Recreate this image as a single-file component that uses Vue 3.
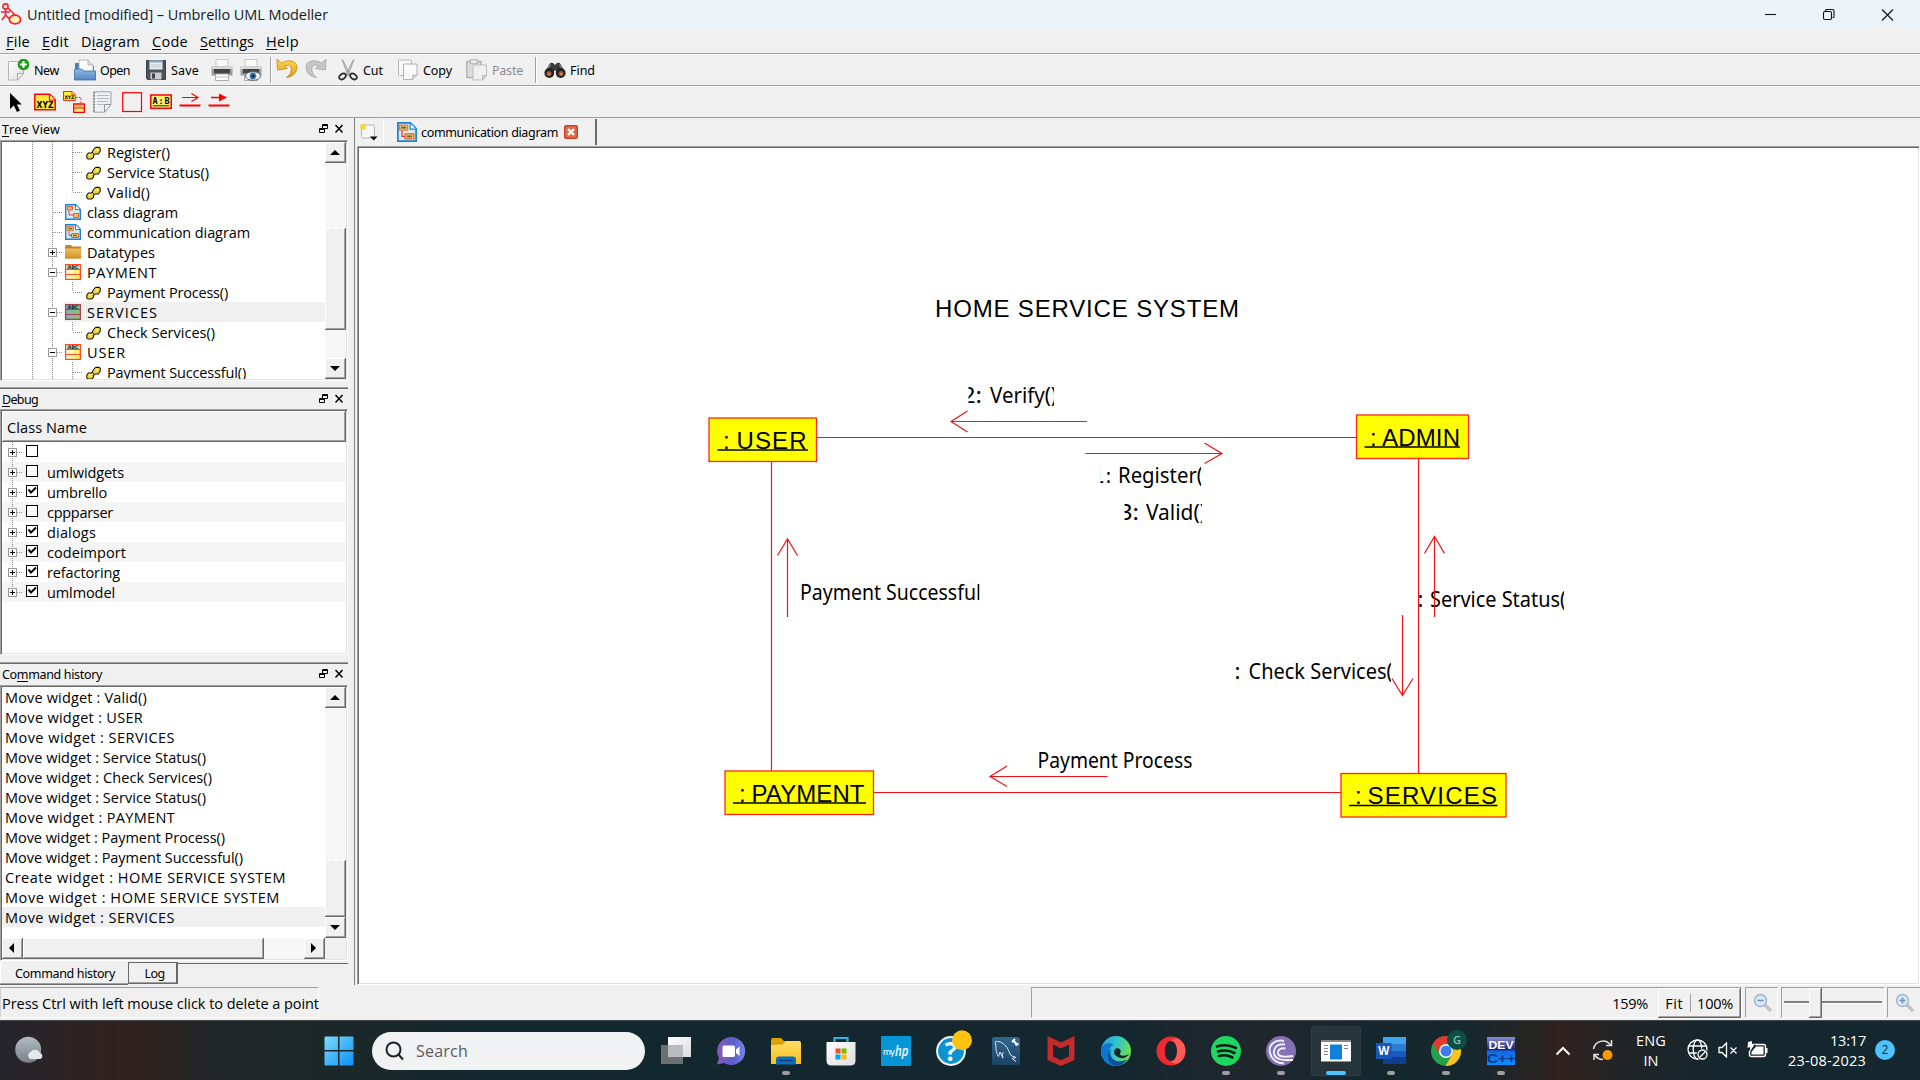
<script setup>
// Spreads a label's letters so that it takes the given advance width.
const vFit = {
  mounted(el, { value }) {
    if (!value) return
    const n = el.textContent.length
    const w = el.getBoundingClientRect().width
    el.style.letterSpacing = `${((value - w) / n).toFixed(3)}px`
  },
}

const menus = [
  { pre: '', key: 'F', post: 'ile', w: 24, slot: 36 },
  { pre: '', key: 'E', post: 'dit', w: 27, slot: 39 },
  { pre: 'D', key: 'i', post: 'agram', w: 59, slot: 71 },
  { pre: '', key: 'C', post: 'ode', w: 36, slot: 48 },
  { pre: '', key: 'S', post: 'ettings', w: 54, slot: 66 },
  { pre: '', key: 'H', post: 'elp', w: 33, slot: 40 },
]

const page = '<path d="M.5 2.500h15v12l-6 6.500h-9z" fill="url(#gPaper)" stroke="#b4b4b4"/><path d="M9.500 21v-6.500h6z" fill="#fff" stroke="#aaa"/>'
const printer = '<path d="M5 .5h12V8H5z" fill="#fafafa" stroke="#bbb" stroke-width=".8"/><path d="M.5 7.500h21v9H.5z" fill="#9c9c9c"/><path d="M.5 7.500h21v2.500H.5z" fill="#dadada"/><path d="M3 10h16v4.500H3z" fill="#444"/><path d="M4.500 15h13v6.500h-13z" fill="#fff" stroke="#999" stroke-width=".8"/><path d="M4.500 18h13" stroke="#bbb"/>'
const art = {
  new: page + '<circle cx="15.500" cy="5.500" r="5.800" fill="#1d9a1d"/><path d="M15.500 2.200v6.600M12.200 5.500h6.600" stroke="#fff" stroke-width="2.200"/>',
  open: '<path d="M1 4h7l2 3h10v10H1z" fill="#4d7db5"/><path d="M5 1h9l5 5v9H5z" fill="#fbfbfb" stroke="#aaa" stroke-width=".8"/><path d="M14 1v5h5" fill="#ddd" stroke="#aaa" stroke-width=".8"/><path d="M.5 21v-10q0-1 1-1h6l3 2h11v9z" fill="url(#gBlue)" stroke="#3c6ca4" stroke-width=".8"/>',
  save: '<path d="M1.500 1.500h19v19h-18l-1-1z" fill="#4d545c" stroke="#3c4146"/><path d="M4.500 1.500h13v9h-13z" fill="#e9edf0"/><path d="M4.500 1.500h13v2h-13z" fill="#8aa3b8"/><path d="M6 6h10M6 8h10" stroke="#c2c8cc"/><path d="M5.500 13.500h11v7h-11z" fill="#c9cdd0"/><path d="M7 14.500h3v5H7z" fill="#3d4248"/>',
  print: printer,
  preview: printer + '<ellipse cx="13" cy="17" rx="7.500" ry="4.300" fill="#f4f8fb" stroke="#5b6770"/><circle cx="13" cy="17" r="3.400" fill="#3f77ad"/><circle cx="13" cy="17" r="1.500" fill="#102030"/>',
  undo: '<path d="M1 0l.5 11 10-1.500-3-2.500c4-2 7.500 0 6.500 5-.5 3-2.500 5-4.500 6.500 6-.5 10-4.500 10.500-10C21.500 2.500 13-.5 5.500 4z" fill="url(#gGold)" stroke="#c08a14" stroke-width=".8"/>',
  redo: '<path d="M21 0l-.5 11-10-1.500 3-2.500c-4-2-7.500 0-6.500 5 .5 3 2.500 5 4.500 6.500C5.500 18 1.500 14 1 8.500.5 2.500 9-.5 16.500 4z" fill="#c6c6c6" stroke="#a4a4a4" stroke-width=".8"/>',
  cut: '<path d="M5 .5l1 1 7 14-2 1zM17 .5l-1 1-7 14 2 1z" fill="#e4e4e4" stroke="#8e8e8e" stroke-width=".8"/><ellipse cx="5.500" cy="17.500" rx="3.600" ry="2.500" transform="rotate(-35 5.500 17.500)" fill="none" stroke="#262626" stroke-width="1.700"/><ellipse cx="16.500" cy="17.500" rx="3.600" ry="2.500" transform="rotate(35 16.500 17.500)" fill="none" stroke="#262626" stroke-width="1.700"/>',
  copy: '<rect x="1.500" y="1" width="13" height="15.500" rx="1" fill="#f8f8f8" stroke="#b4b4b4"/><path d="M6.500 5h13.500v11l-4.500 4.500h-9z" fill="#fafafa" stroke="#b0b0b0"/><path d="M15.500 20.500v-4.500h4.500z" fill="#ddd" stroke="#aaa" stroke-width=".7"/>',
  paste: '<path d="M.8 2.500h14v16H.8z" fill="#dcdcdc" stroke="#b0b0b0" stroke-width="1.400"/><path d="M4.300 .8h7v4h-7z" fill="#eee" stroke="#aaa"/><path d="M7 6h13.500v10.500l-4 4.500H7z" fill="#f0f0f0" stroke="#bdbdbd"/><path d="M16.500 21v-4.500h4z" fill="#ddd" stroke="#b5b5b5"/>',
  find: '<path d="M5 6q1-3 4-2l2 2 2-2q3-1 4 2l4 7-8 1-2-3-2 3-8-1z" fill="#3a3a3a"/><path d="M6.500 5.500l-3.500 6M15.500 5.500l3.500 6" stroke="#8a8a8a" stroke-width="1.200"/><circle cx="5.300" cy="14" r="4.900" fill="#222"/><circle cx="16.700" cy="14" r="4.900" fill="#222"/><circle cx="5" cy="14.500" r="2.600" fill="#a5552f"/><circle cx="17" cy="14.500" r="2.600" fill="#a5552f"/><circle cx="5" cy="15" r="1.100" fill="#d89a6a"/><circle cx="17" cy="15" r="1.100" fill="#d89a6a"/>',
}

const actions = [
  { icon: 'new', label: 'New', slot: 66, w: 25 },
  { icon: 'open', label: 'Open', slot: 71, w: 30 },
  { icon: 'save', label: 'Save', slot: 66, w: 28 },
  { icon: 'print', slot: 29 },
  { icon: 'preview', slot: 30 },
  { sep: true, slot: 6 },
  { icon: 'undo', slot: 29 },
  { icon: 'redo', slot: 32 },
  { icon: 'cut', label: 'Cut', slot: 60, w: 20 },
  { icon: 'copy', label: 'Copy', slot: 69, w: 29 },
  { icon: 'paste', label: 'Paste', slot: 69, w: 31, off: true },
  { sep: true, slot: 9 },
  { icon: 'find', label: 'Find', slot: 60, w: 25 },
]

const xyz = '<path d="M.8 .8h15l5.400 5.400v10H.8z" fill="#ffe93c" stroke="red" stroke-width="1.500"/><path d="M15.500 1v5.500H21" fill="#fff2a0" stroke="red" stroke-width="1.200"/><text x="11" y="14" font-size="8.500" font-weight="bold" text-anchor="middle" textLength="17" lengthAdjust="spacingAndGlyphs" font-family="DejaVu Sans">XYZ</text>'
const tools = [
  '<path d="M5 2v16l3.800-3.500 3.200 6.500 3-1.400-3.200-6.200h5z" fill="#000"/>',
  '<g transform="translate(0 2.500)">' + xyz + '</g>',
  '<g transform="scale(.58)">' + xyz + '</g><path d="M13 6.500h5v6" fill="none" stroke="red" stroke-dasharray="1.500 1.500"/><path d="M10.700 13h10.600v8.300H10.700z" fill="#ffee8a" stroke="red" stroke-width="1.300"/><path d="M11 17h10" stroke="red"/><path d="M12.500 15h7" stroke="#a08020"/>',
  '<path d="M2 .8h17v12l-6.500 8.400H2z" fill="#eef1f2" stroke="#9aa0a3"/><path d="M5 4.500h12M5 7.500h12M5 10.500h11M5 13.500h7" stroke="#b3babd"/><path d="M12.500 21v-7.500H19z" fill="#fff" stroke="#8d9396"/><path d="M2 1v20" stroke="#777" stroke-dasharray="1.500 1.500" stroke-width="1.500"/>',
  '<rect x="1.700" y="1.700" width="18.800" height="18.800" fill="none" stroke="#f00" stroke-width="1.200"/>',
  '<rect x=".8" y="4" width="20.400" height="13.300" fill="#ffee74" stroke="red" stroke-width="1.500"/><text x="11" y="13" font-size="8.500" font-weight="bold" text-anchor="middle" textLength="17" font-family="DejaVu Sans Mono">A:B</text><path d="M3 14.800h16" stroke="#222"/>',
  '<path d="M3 6.500h15M12.500 2.500l6.500 4-6.500 4" fill="none" stroke="red" stroke-width="1.200"/><path d="M.5 14.500h21" stroke="red" stroke-width="2"/>',
  '<path d="M3 6.500h10" stroke="red" stroke-width="1.500"/><path d="M11 2.500l8 4-8 4z" fill="red"/><path d="M.5 14.500h21" stroke="red" stroke-width="2"/>',
]

const sheet = '<path d="M.7 .7h10l4.600 4.600v10H.7z" fill="#d8ecf8" stroke="#1684d8" stroke-width="1.400"/><path d="M10.500 1v4.600h4.600" fill="#fff" stroke="#1684d8"/>'
const kinds = {
  method: '<path d="M.8 10.500L2.500 8h3.200l1-1.300L8.500 3.700 10.500 2H14l1.200 1v3l-2 3h-3L8 10.500v2L6 14.500H2.200L.8 13.200z" fill="#f0d63a" stroke="#111" stroke-width="1.100"/><path d="M6.500 7l2.200 2.500" stroke="#111"/><path d="M3 10.500l2-1M10.500 5l2.500-1" stroke="#fffac0" stroke-width="1.200"/>',
  cdiag: sheet + '<path d="M2.500 2.500h5v3.500h-5z" fill="#f7b480" stroke="#ec5a28"/><path d="M8.500 9.500h5v4h-5z" fill="#f7bd60" stroke="#ec5a28"/><path d="M4 6.500v4.500h4.500" fill="none" stroke="#e33"/>',
  comm: sheet + '<path d="M2 2.500h6.500v4H2z" fill="#e3c878" stroke="#ec7a38"/><path d="M6.500 9.500h7v4h-7z" fill="#e3d070" stroke="#ec5a28"/><path d="M4 7v4.500h2.500" fill="none" stroke="#e33"/><path d="M3.300 4.500h4M8 11.500h4" stroke="#5a6a30" stroke-width="1.300"/>',
  folder: '<path d="M0 2.500l1-1.500h5l1 1.500h9v4H0z" fill="#b98331"/><path d="M0 4.500h16V14q0 .8-.8.8H.8Q0 14.800 0 14z" fill="url(#gFolder)"/>',
  klass: '<path d="M.6 .6h14.800v14.800H.6z" fill="url(#gClass)" stroke="#fb4a24" stroke-width="1.200"/><path d="M1.200 1.200h13.600v3.600H1.200z" fill="#ccd09a"/><path d="M0 5.500h16M0 10.500h16" stroke="#fb4a24" stroke-width="1.200"/><text x="8" y="4.800" font-size="5" font-weight="bold" fill="#333" text-anchor="middle" textLength="11" font-family="DejaVu Sans">ABC</text>',
  klassSel: '<path d="M.6 .6h14.800v14.800H.6z" fill="url(#gSel)" stroke="#a84450" stroke-width="1.200"/><path d="M0 5.500h16M0 10.500h16" stroke="#a84450" stroke-width="1.200"/><text x="8" y="4.800" font-size="5" font-weight="bold" fill="#123" text-anchor="middle" textLength="11" font-family="DejaVu Sans">ABC</text>',
}

const tree = [
  { t: 'Register()', k: 'method', w: 63 },
  { t: 'Service Status()', k: 'method', w: 102 },
  { t: 'Valid()', k: 'method', w: 43, last: true },
  { t: 'class diagram', k: 'cdiag', w: 91 },
  { t: 'communication diagram', k: 'comm', w: 163 },
  { t: 'Datatypes', k: 'folder', w: 68, exp: '+' },
  { t: 'PAYMENT', k: 'klass', w: 70, exp: '-' },
  { t: 'Payment Process()', k: 'method', w: 121, last: true },
  { t: 'SERVICES', k: 'klassSel', w: 71, exp: '-', sel: true },
  { t: 'Check Services()', k: 'method', w: 108, last: true },
  { t: 'USER', k: 'klass', w: 39, exp: '-' },
  { t: 'Payment Successful()', k: 'method', w: 139 },
]

const classes = [
  { t: '', on: false },
  { t: 'umlwidgets', on: false, w: 77 },
  { t: 'umbrello', on: true, w: 60 },
  { t: 'cppparser', on: false, w: 66 },
  { t: 'dialogs', on: true, w: 49 },
  { t: 'codeimport', on: true, w: 79 },
  { t: 'refactoring', on: true, w: 73 },
  { t: 'umlmodel', on: true, w: 68 },
]

const history = [
  ['Move widget : Valid()', 142],
  ['Move widget : USER', 138],
  ['Move widget : SERVICES', 170],
  ['Move widget : Service Status()', 201],
  ['Move widget : Check Services()', 207],
  ['Move widget : Service Status()', 201],
  ['Move widget : PAYMENT', 170],
  ['Move widget : Payment Process()', 220],
  ['Move widget : Payment Successful()', 238],
  ['Create widget : HOME SERVICE SYSTEM', 281],
  ['Move widget : HOME SERVICE SYSTEM', 275],
  ['Move widget : SERVICES', 170],
]

const boxes = [
  { x: 709, y: 418, w: 107.500, name: 'USER', cx: 723, tx: 736.5, len: 70, u: [717.5, 808] },
  { x: 1356.5, y: 415, w: 112, name: 'ADMIN', cx: 1370, tx: 1382, len: 78, u: [1364.5, 1460] },
  { x: 725, y: 771, w: 148.500, name: 'PAYMENT', cx: 739, tx: 751.5, len: 113, u: [733, 866] },
  { x: 1341, y: 773.5, w: 165, name: 'SERVICES', cx: 1355, tx: 1367.5, len: 129.500, u: [1349, 1497.5] },
]

// Message labels; each one is cut at its widget's edges (from..to).
const messages = [
  { n: '2:', nx: 962, nl: 20, t: 'Verify()', x: 990, len: 67, y: 403, from: 968.5, to: 1054 },
  { n: '1:', nx: 1092, nl: 20, t: 'Register()', x: 1118, len: 91, y: 483, from: 1100.500, to: 1201, foot: true },
  { n: '3:', nx: 1119, nl: 20, t: 'Valid()', x: 1146, len: 60, y: 519.5, from: 1124.500, to: 1202 },
  { n: ':', nx: 1417.500, nl: 6, t: 'Service Status()', x: 1430, len: 142, y: 606.5, from: 1418, to: 1564 },
  { n: ':', nx: 1234.5, nl: 6, t: 'Check Services()', x: 1248.500, len: 150, y: 679, from: 1230, to: 1391 },
  { n: '', nx: 0, nl: 0, t: 'Payment Successful', x: 800, len: 181, y: 599.5, from: 790, to: 979.500 },
  { n: '', nx: 0, nl: 0, t: 'Payment Process', x: 1037.500, len: 155, y: 767.5, from: 1030, to: 1200 },
]

const apps = [
  { a: '<path d="M0 9h22v19H0z" fill="#6b7072"/><path d="M7 1h23v20H7z" fill="url(#gPaper)"/><path d="M7 9h15v12H7z" fill="#b9bcbd"/>' },
  { a: '<path d="M15 1a14 14 0 1 1-7 26l-7 1.500 2-6.500A14 14 0 0 1 15 1z" fill="url(#gChat)"/><rect x="6.500" y="9.500" width="12.500" height="11.500" rx="1.500" fill="#fff"/><path d="M20 13.500l3.500-3v9.500l-3.500-3z" fill="#fff"/>' },
  { run: 1, a: '<path d="M0 4q0-2 2-2h8l3 3h13v8H0z" fill="#dea102"/><path d="M0 9l12-.5 3-3.500h13q2 0 2 2v21H0z" fill="url(#gYel)"/><path d="M5 28.500v-5q0-3 3-3h14q3 0 3 3v5z" fill="#0b6cc0"/><path d="M8 24.500h14" stroke="#063f7c" stroke-width="1.200"/>' },
  { a: '<path d="M8.500 8V2h13v6" fill="none" stroke="#2fb4e8" stroke-width="2.200"/><path d="M.5 6h29v18.500q0 5-5 5h-19q-5 0-5-5z" fill="url(#gPaper)"/><path d="M9.500 12.500h5v5h-5z" fill="#f2501f"/><path d="M15.500 12.500h5v5h-5z" fill="#7eb900"/><path d="M9.500 18.500h5v5h-5z" fill="#01a3ee"/><path d="M15.500 18.500h5v5h-5z" fill="#fdb800"/>' },
  { a: '<rect width="30" height="30" rx="1" fill="#0496d6"/><text x="2" y="18.500" font-size="9.500" fill="#fff" textLength="12" font-family="Lato">my</text><text x="14" y="19.500" font-size="15" font-style="italic" font-weight="600" fill="#fff" textLength="13.500" lengthAdjust="spacingAndGlyphs" font-family="Open Sans">hp</text>' },
  { a: '<circle cx="15" cy="15" r="13.900" fill="#0c93d2" stroke="#f2f6f8" stroke-width="2"/><text x="15" y="25" font-size="26" font-weight="bold" fill="#fff" text-anchor="middle" font-family="Open Sans">?</text><circle cx="26" cy="4.300" r="10" fill="#ffc20e"/>' },
  { a: '<rect x="1" y="1" width="28" height="28" rx="2.500" fill="url(#gSql)"/><path d="M7.500 20.500C6 19 4.500 13 5 9.500 4 7.500 4 5.500 5 5.500c4-.5 8 2 11 6 2 3 2.500 6 4 8l5 2-4 .8 4 3.200M7.500 20.500l1.500-4.500 3 6M12 22c-1-3-.5-5 .5-6" fill="none" stroke="#dfe9f0" stroke-width="1"/><path d="M22 4.500l4 4M21 6l3-3M24.500 9.500l3-2" stroke="#fff" stroke-width="2"/>' },
  { a: '<path d="M1.500 0L15 6.500 28.500 0v24L15 30 1.500 24zM7 8.500v12l8 3.700 8-3.700v-12L15 12.500z" fill="#c52b2a" fill-rule="evenodd"/>' },
  { a: '<circle cx="15" cy="15" r="15" fill="url(#gEdge)"/><path d="M.3 13C2 7 9 6 13 9c-4 1-6 5-4 10 2 6 9 8 16 5-4 6-13 8-19 3C1.500 24-.5 18 .3 13z" fill="#0b78cf"/><path d="M11 12c-3 3-2 9 2 12 5 3 10 1 13-1-3 6-9 8-14 6-6-3-7-12-1-17z" fill="#0d4f9c"/><path d="M13.500 14q3-4 6 0c1 2-1 3-.5 4.500 1.500 2 7 1.500 9-1-1 3-5 6-10 4-4-1.500-6-5-4.500-7.500z" fill="#16262d"/>' },
  { a: '<path d="M15 .5A14.500 14.500 0 1 0 15 29.500 14.500 14.500 0 1 0 15 .5zM15 5c4 0 6 4.500 6 10s-2 10-6 10-6.200-4.500-6.200-10S11 5 15 5z" fill="#f02a33" fill-rule="evenodd"/><path d="M15 5c2-2.500 5-3.500 8-2 4 3 6.500 7 6.500 12s-2.500 9-6.500 12c-3 1.500-6 .5-8-2 4 0 6-4.500 6-10s-2-10-6-10z" fill="#ff5a55"/>' },
  { run: 1, a: '<circle cx="15" cy="15" r="15" fill="#1ed760"/><path d="M6 10.500q10-3 19 1.500M7 15.500q9-2.500 16.500 1.500M8 20q7-2 13.500 1.500" fill="none" stroke="#0b1a12" stroke-width="2.600" stroke-linecap="round"/>' },
  { run: 1, a: '<circle cx="15" cy="15" r="15" fill="#8272b4"/><path d="M18 5C9 3 2 9 4 17c1.500 6 6 10 14 10.500M19 8.500c-7-1.500-12 3-11 9 1 5 5 7 19 6.500M19.500 12.500c-5-1-8 1.500-7.500 5 .7 3 4 4 15 2.500" fill="none" stroke="#f1eef8" stroke-width="1.900"/>' },
  { active: 1, a: '<path d="M0 4h30v22H0z" fill="#fdfdfd"/><path d="M0 4h30v2H0z" fill="#8b8680"/><path d="M0 25.500h30" stroke="#9a958e"/><path d="M9 8.500h12v15H9z" fill="#1180d8"/><path d="M3 9.500h4M3 12.500h4M3 15.500h4M3 18.500h4M23 9.500h4M23 12.500h4" stroke="#888"/>' },
  { run: 1, a: '<path d="M7 1h23v7H7z" fill="#41a5ee"/><path d="M7 8h23v7H7z" fill="#2b7cd3"/><path d="M7 15h23v6.500H7z" fill="#185abd"/><path d="M7 21.500h23V28H7z" fill="#103f91"/><rect y="7" width="15.500" height="16" rx="1" fill="#1a56b8"/><text x="7.700" y="19" font-size="11.500" font-weight="bold" fill="#fff" text-anchor="middle" font-family="Open Sans">W</text>' },
  { run: 1, a: '<circle cx="15" cy="15" r="15" fill="#22a14a"/><path d="M2 7.500A15 15 0 0 1 28 7.500L15 8.500a7 7 0 0 0-6 10z" fill="#e33b2e"/><path d="M28 7.500A15 15 0 0 1 14.500 30l6.700-11.500A7 7 0 0 0 20 9z" fill="#fcc31e"/><circle cx="15" cy="15" r="7" fill="#fff"/><circle cx="15" cy="15" r="5.500" fill="#3b7ded"/><circle cx="26" cy="4" r="10" fill="#0c4f45"/><text x="26" y="8" font-size="11" font-weight="600" fill="#8fc0b2" text-anchor="middle" font-family="Open Sans">G</text>' },
  { run: 1, a: '<rect x="1" y="1" width="28" height="28" fill="url(#gDev)"/><text x="15" y="12.500" font-size="11.500" font-weight="bold" fill="#fff" text-anchor="middle" textLength="25" lengthAdjust="spacingAndGlyphs" font-family="Liberation Sans">DEV</text><text x="15.500" y="26.500" font-size="12.500" font-weight="bold" fill="#083b85" text-anchor="middle" textLength="29" lengthAdjust="spacingAndGlyphs" font-family="Liberation Sans">C++</text>' },
]
</script>

<template>
  <div class="screen">
    <svg class="defs" width="0" height="0">
      <defs>
        <linearGradient id="gPaper" x2="1" y2="1"><stop stop-color="#fff" /><stop offset="1" stop-color="#dcdcdc" /></linearGradient>
        <linearGradient id="gBlue" x2="0" y2="1"><stop stop-color="#8fb9e2" /><stop offset="1" stop-color="#5488c2" /></linearGradient>
        <linearGradient id="gGold" x2="0" y2="1"><stop stop-color="#ffd94e" /><stop offset="1" stop-color="#dc9a16" /></linearGradient>
        <linearGradient id="gFolder" x2="0" y2="1"><stop stop-color="#f0bd5e" /><stop offset="1" stop-color="#d18f28" /></linearGradient>
        <linearGradient id="gClass" x2="1" y2="0"><stop stop-color="#fffbe8" /><stop offset="1" stop-color="#fff04a" /></linearGradient>
        <linearGradient id="gSel" x2="1" y2="0"><stop stop-color="#86aebb" /><stop offset="1" stop-color="#8fc06a" /></linearGradient>
        <linearGradient id="gChat" x2="1" y2="0"><stop stop-color="#8659b5" /><stop offset=".6" stop-color="#5b5fcf" /><stop offset="1" stop-color="#7a86ea" /></linearGradient>
        <linearGradient id="gYel" x2="0" y2="1"><stop stop-color="#ffdc6a" /><stop offset="1" stop-color="#fbbf17" /></linearGradient>
        <linearGradient id="gSql" x2="0" y2="1"><stop stop-color="#2f6690" /><stop offset="1" stop-color="#1c4565" /></linearGradient>
        <linearGradient id="gEdge" x2="1" y2=".3"><stop stop-color="#2a9fe0" /><stop offset=".55" stop-color="#33c3cd" /><stop offset="1" stop-color="#69dd55" /></linearGradient>
        <linearGradient id="gDev" x2="0" y2="1"><stop stop-color="#8a8fd8" /><stop offset=".45" stop-color="#20206c" /><stop offset=".5" stop-color="#1566e0" /><stop offset="1" stop-color="#0e8cff" /></linearGradient>
        <linearGradient id="gWin" x2="1" y2="1"><stop stop-color="#7ddcff" /><stop offset="1" stop-color="#0a8ff5" /></linearGradient>
        <linearGradient id="gMoon" x2="0" y2="1"><stop stop-color="#b3bac1" /><stop offset="1" stop-color="#78828b" /></linearGradient>
      </defs>
    </svg>

    <header class="titlebar">
      <svg class="logo" viewBox="0 0 22 22" width="22" height="22">
        <circle cx="4.500" cy="3.500" r="2.600" fill="none" stroke="#f22" stroke-width="1.600" />
        <path d="M4.500 6v6M0 9h9M4.500 12L1 17M4.500 12l4 4M7 5l7 7" fill="none" stroke="#f22" stroke-width="1.600" />
        <ellipse cx="14" cy="16.500" rx="5.600" ry="4.400" fill="#fdf0c0" stroke="#f22" stroke-width="1.700" />
      </svg>
      <span class="caption"><span v-fit="301">Untitled [modified] – Umbrello UML Modeller</span></span>
      <svg class="winbtns" viewBox="0 0 136 16" width="136" height="16" fill="none" stroke="#111" stroke-width="1.100">
        <path d="M2 7.500h11" />
        <rect x="60.500" y="4.500" width="8" height="8" rx="1.500" /><path d="M62.500 4.500V3.500q0-1 1-1h6q1.500 0 1.500 1.500v5.500q0 1.200-1.500 1.200" />
        <path d="M119 2.500l11 11M130 2.500l-11 11" />
      </svg>
    </header>

    <nav class="menubar">
      <span v-for="m in menus" :key="m.key" class="menu" :style="{ width: m.slot + 'px' }"><span v-fit="m.w">{{ m.pre }}<u>{{ m.key }}</u>{{ m.post }}</span></span>
    </nav>

    <div class="toolbar first">
      <div v-for="(a, i) in actions" :key="i" class="action" :class="{ off: a.off }" :style="{ width: a.slot + 'px' }">
        <i v-if="a.sep" class="vsep"></i>
        <svg v-else viewBox="0 0 22 22" width="22" height="22" v-html="art[a.icon]"></svg>
        <span v-if="a.label" v-fit="a.w" class="lbl">{{ a.label }}</span>
      </div>
    </div>

    <div class="toolbar second">
      <svg v-for="(t, i) in tools" :key="i" viewBox="0 0 22 22" width="22" height="22" v-html="t"></svg>
    </div>

    <main class="work">
      <aside class="docks">
        <section class="dock tree-dock">
          <h2><span v-fit="58"><u>T</u>ree View</span>
            <svg viewBox="0 0 26 12" width="26" height="12"><path d="M4.500 1.500h5v4h-5zM4 2.500h6M1.500 5.500h5v4h-5zM1 6.500h6" fill="none" stroke="#000" /><path d="M17.500 2l7 7.500M24.500 2l-7 7.500" stroke="#000" stroke-width="1.500" /></svg>
          </h2>
          <div class="frame row-split">
            <div class="rows">
              <div v-for="(r, i) in tree" :key="i" class="row tree-row">
                <svg v-if="r.k === 'method'" class="guides" viewBox="2 0 82 20" width="82" height="20"><path :d="'M32.500 0v20M52.500 0v20M72.500 0v' + (r.last ? 10 : 20) + 'M73 10.500h9'" /></svg>
                <svg v-else class="guides" viewBox="2 0 62 20" width="62" height="20"><path d="M32.500 0v20M52.500 0v20M53 10.500h10" /><g v-if="r.exp" class="expander"><rect x="48.500" y="6.500" width="8" height="8" /><path :d="r.exp === '+' ? 'M50 10.500h5M52.500 8v5' : 'M50 10.500h5'" /></g></svg>
                <span class="entry" :class="{ sel: r.sel }">
                  <svg :class="r.k" viewBox="0 0 16 16" width="16" height="16" v-html="kinds[r.k]"></svg>
                  <span v-fit="r.w">{{ r.t }}</span>
                </span>
              </div>
            </div>
            <div class="vbar"><b class="raised btn up"></b><i class="raised thumb t1"></i><b class="raised btn down"></b></div>
          </div>
        </section>

        <section class="dock debug-dock lined">
          <h2><span v-fit="36"><u>D</u>ebug</span>
            <svg viewBox="0 0 26 12" width="26" height="12"><path d="M4.500 1.500h5v4h-5zM4 2.500h6M1.500 5.500h5v4h-5zM1 6.500h6" fill="none" stroke="#000" /><path d="M17.500 2l7 7.500M24.500 2l-7 7.500" stroke="#000" stroke-width="1.500" /></svg>
          </h2>
          <div class="frame">
            <div class="colhead raised"><span v-fit="80">Class Name</span></div>
            <div v-for="(c, i) in classes" :key="i" class="row class-row">
              <svg class="guides" viewBox="2 0 36 20" width="36" height="20"><path :d="i === 7 ? 'M12.500 0v10M13 10.500h9' : 'M12.500 0v20M13 10.500h9'" /><g class="expander"><rect x="8.500" y="6.500" width="8" height="8" /><path d="M10 10.500h5M12.500 8v5" /></g><rect class="check" x="26.500" y="3.500" width="11" height="11" /><path v-if="c.on" class="tick" d="M28.500 7.500l2.500 3 5-5" /></svg>
              <span v-fit="c.w">{{ c.t }}</span>
            </div>
          </div>
        </section>

        <section class="dock history-dock lined">
          <h2><span v-fit="100">Co<u>m</u>mand history</span>
            <svg viewBox="0 0 26 12" width="26" height="12"><path d="M4.500 1.500h5v4h-5zM4 2.500h6M1.500 5.500h5v4h-5zM1 6.500h6" fill="none" stroke="#000" /><path d="M17.500 2l7 7.500M24.500 2l-7 7.500" stroke="#000" stroke-width="1.500" /></svg>
          </h2>
          <div class="frame">
            <div class="row-split upper">
              <div class="rows">
                <div v-for="(h, i) in history" :key="i" class="row hist-row" :class="{ sel: i === 11 }"><span v-fit="h[1]">{{ h[0] }}</span></div>
              </div>
              <div class="vbar"><b class="raised btn up"></b><i class="raised thumb t2"></i><b class="raised btn down"></b></div>
            </div>
            <div class="hbar"><b class="raised btn left"></b><i class="raised thumb"></i><b class="raised btn right"></b></div>
          </div>
          <div class="tabs"><span class="tab on"><span v-fit="100">Command history</span></span><span class="tab log"><span v-fit="20">Log</span></span></div>
        </section>
      </aside>

      <section class="mdi">
        <div class="doc-tabs">
          <svg class="newtab" viewBox="0 0 20 18" width="20" height="18"><rect x="2.500" y="2" width="13" height="13" rx="1.500" fill="#f7f7f7" stroke="#b5b5b5" /><circle cx="4" cy="4" r="3" fill="#f7d43c" /><path d="M11 13.500h7.500L14.700 17.500z" fill="#000" /></svg>
          <div class="doc-tab">
            <svg viewBox="0 0 16 16" width="20" height="20" v-html="kinds.comm"></svg>
            <span v-fit="137">communication diagram</span>
            <svg viewBox="0 0 14 14" width="14" height="14"><rect x=".6" y=".6" width="12.800" height="12.800" rx="1.500" fill="#e0694a" stroke="#c63c1c" stroke-width="1.200" /><path d="M4 4l6 6M10 4l-6 6" stroke="#fff" stroke-width="2.300" /></svg>
          </div>
        </div>
        <div class="frame canvas">
          <svg class="diagram" viewBox="359 148 1559 835" width="1559" height="835">
            <defs>
              <clipPath v-for="(m, i) in messages" :id="'cut' + i" :key="i"><rect :x="m.from" :y="m.y - 24" :width="m.to - m.from" height="34" /></clipPath>
            </defs>
            <text class="uml" x="935" y="316.500" textLength="304">HOME SERVICE SYSTEM</text>
            <path class="link" d="M816.500 437.500H1356M771.500 461v310M1418.500 458v315M873.500 792.500H1341" />
            <g v-for="(m, i) in messages" :key="i" :clip-path="'url(#cut' + i + ')'">
              <text class="msg" :y="m.y"><tspan v-if="m.n" :class="{ foot: m.foot }" :x="m.nx" :textLength="m.nl" lengthAdjust="spacingAndGlyphs">{{ m.n }}</tspan><tspan :x="m.x" :textLength="m.len" lengthAdjust="spacingAndGlyphs">{{ m.t }}</tspan></text>
            </g>
            <path class="link" d="M1087 421.500H951M1085.500 453.500H1222M787.500 617V539M1434.500 617V536.500M1402.500 615V695.500M1107.500 776.500H990" />
            <path class="link head" d="M967.500 411l-16.500 10.500 16.500 10.500M1204.500 443l17.500 10.500-17.500 10M777.500 555.500l10-16.500 10 16.500M1424.500 553.500l10-17 10 17M1392 678.500l10.500 17 10.500-17M1007 766l-17 10.500 17 10" />
            <g v-for="b in boxes" :key="b.name">
              <rect class="box" :x="b.x" :y="b.y" :width="b.w" height="43.500" />
              <text class="uml" :y="b.y + 30.500"><tspan :x="b.cx">:</tspan><tspan :x="b.tx" :textLength="b.len">{{ b.name }}</tspan></text>
              <path class="under" :d="'M' + b.u[0] + ' ' + (b.y + 32) + 'H' + b.u[1]" />
            </g>
          </svg>
        </div>
      </section>
    </main>

    <footer class="status">
      <div class="sunk hint"><span v-fit="317">Press Ctrl with left mouse click to delete a point</span></div>
      <div class="sunk zoomtext">
        <span v-fit="36" class="pct">159%</span>
        <div class="raised zoombtns"><span v-fit="18">Fit</span><i></i><span v-fit="36">100%</span></div>
      </div>
      <div class="sunk lens"><svg viewBox="0 0 20 20" width="20" height="20"><path d="M12 12l6 6" stroke="#c3c3c3" stroke-width="3.400" /><circle cx="7.500" cy="7.500" r="6" fill="#d9e8f6" stroke="#9fb3c8" stroke-width="1.400" /><path d="M4.500 7.500h6" stroke="#6f93bd" stroke-width="1.600" /></svg></div>
      <div class="sunk slider"><div class="groove"></div><div class="raised knob"></div></div>
      <div class="sunk lens last"><svg viewBox="0 0 20 20" width="20" height="20"><path d="M12 12l6 6" stroke="#c3c3c3" stroke-width="3.400" /><circle cx="7.500" cy="7.500" r="6" fill="#d9e8f6" stroke="#9fb3c8" stroke-width="1.400" /><path d="M4.500 7.500h6M7.500 4.500v6" stroke="#6f93bd" stroke-width="1.600" /></svg></div>
    </footer>

    <footer class="taskbar">
      <svg class="weather" viewBox="0 0 29 28" width="29" height="28"><circle cx="13.200" cy="13.700" r="13" fill="url(#gMoon)" /><path d="M15 23a4 4 0 0 1 .5-7 5.500 5.500 0 0 1 9.500 1 3.200 3.200 0 0 1 .5 6z" fill="#e6e9ec" /></svg>
      <svg class="start" viewBox="0 0 30 30" width="30" height="30"><path d="M.5 1.500q0-1 1-1H14V14H.5zM15.500 .5h13q1 0 1 1V14h-14zM.5 15.500H14v14H1.500q-1 0-1-1zM15.500 15.500h14v13q0 1-1 1h-13z" fill="url(#gWin)" /></svg>
      <div class="search">
        <svg viewBox="0 0 20 20" width="20" height="20" fill="none" stroke="#222" stroke-width="2"><circle cx="8.500" cy="8.500" r="7" /><path d="M13.500 13.500l4.500 5" /></svg>
        <span v-fit="52">Search</span>
      </div>
      <div class="apps">
        <div v-for="(p, i) in apps" :key="i" class="app" :class="{ active: p.active, run: p.run }"><svg viewBox="0 0 30 30" width="30" height="30" v-html="p.a"></svg></div>
      </div>
      <svg class="chev" viewBox="0 0 16 10" width="16" height="10" fill="none" stroke="#fff" stroke-width="2"><path d="M1.500 8.500L8 2l6.500 6.500" /></svg>
      <svg class="sync" viewBox="0 0 22 22" width="22" height="22" fill="none" stroke="#dfe3e5" stroke-width="1.500"><path d="M1.500 10A9.500 9.500 0 0 1 18.500 6M19.500 1v5.500H14M2 21v-5.500h5M3 16.500q3 4 8 4" /><circle cx="15.500" cy="16" r="5" fill="#ff9800" stroke="none" /></svg>
      <div class="lang"><span v-fit="30">ENG</span><span v-fit="15">IN</span></div>
      <svg class="net" viewBox="0 0 22 22" width="22" height="22" fill="none" stroke="#fff" stroke-width="1.300"><circle cx="10.500" cy="10.500" r="9.500" /><ellipse cx="10.500" cy="10.500" rx="4.300" ry="9.500" /><path d="M1.500 7h18M1.500 14h18" /><circle cx="15.500" cy="15.500" r="6" fill="#16262d" stroke="none" /><circle cx="15.500" cy="15.500" r="4.500" /><path d="M12.500 18.500l6-6" /></svg>
      <svg class="vol" viewBox="0 0 20 16" width="20" height="16" fill="none" stroke="#fff" stroke-width="1.300"><path d="M1 5.500h3l4.500-4.500v14L4 10.500H1zM12.500 5.500l6 6M18.500 5.500l-6 6" /></svg>
      <svg class="bat" viewBox="0 0 22 18" width="22" height="18"><path d="M8 3.500h8.500q2 0 2 2v8q0 2-2 2H4.500q-2 0-2-2v-4" fill="none" stroke="#fff" stroke-width="1.400" /><path d="M9 5.500h7.500v8h-12V11z" fill="#fff" /><path d="M19.500 7v5" stroke="#fff" stroke-width="2" /><path d="M1 1l4-1v3L8 2.500l-5 8V6L.500 7z" fill="#fff" /></svg>
      <div class="clock"><span v-fit="36">13:17</span><span v-fit="78">23-08-2023</span></div>
      <span class="count">2</span>
    </footer>
  </div>
</template>

<style>
body { margin: 0; overflow: hidden; }
</style>

<style scoped>
.screen { width: 1920px; height: 1080px; display: flex; flex-direction: column; background: #f0f0f0; color: #000; font: 14.5px "Open Sans", "Noto Sans", sans-serif; white-space: nowrap; overflow: hidden; }
.screen * { box-sizing: border-box; }
.defs { position: absolute; }
svg { display: block; flex: none; }
u { text-decoration: none; border-bottom: 1px solid #000; display: inline-block; line-height: 15px; }

.titlebar { height: 29px; background: #ecf4f9; display: flex; align-items: center; }
.logo { margin: -1px 0 0 1px; }
.caption { margin-left: 4px; width: 1735px; font-size: 14.500px; color: #1a1a1a; }
.winbtns { margin-left: 1px; }

.menubar { height: 25px; display: flex; align-items: center; padding-left: 6px; border-bottom: 1px solid #a0a0a0; }

.toolbar { display: flex; align-items: center; border-top: 1px solid #fff; border-bottom: 1px solid #a0a0a0; height: 32px; font: 12.500px "Noto Sans", sans-serif; }
.first { padding-left: 8px; }
.second { padding-left: 5px; gap: 6.950px; }
.action { display: flex; align-items: center; height: 26px; gap: 4px; flex: none; }
.off { color: #8c8c8c; }
.vsep { width: 1px; height: 26px; background: #a0a0a0; box-shadow: 1px 0 #fff; }

.work { height: 867px; display: flex; }
.docks { width: 348px; }
.dock { display: flex; flex-direction: column; }
.tree-dock { height: 269px; }
.debug-dock { height: 275px; }
.history-dock { height: 323px; }
.lined { border-top: 1px solid #a0a0a0; box-shadow: inset 0 1px #696969; }
h2 { margin: 0; height: 22px; padding: 0 4px 0 2px; display: flex; align-items: center; justify-content: space-between; font: 12.500px "Noto Sans", sans-serif; }
.debug-dock h2 { height: 21px; padding-top: 1px; }
h2 u { line-height: 13px; }
.frame { background: #fff; border: 1px solid; border-color: #a0a0a0 #fff #fff #a0a0a0; box-shadow: inset 1px 1px #696969, inset -1px -1px #e3e3e3; padding: 1px; overflow: hidden; }
.tree-dock .frame { height: 241px; }
.debug-dock .frame { height: 246px; }
.history-dock .frame { height: 276px; }
.row-split { display: flex; }
.rows { flex: 1; overflow: hidden; }
.row { height: 20px; display: flex; align-items: center; line-height: 20px; }
.row > span, .entry > span { position: relative; top: 1px; }
.guides path { stroke: #8f8f8f; stroke-dasharray: 1 1; fill: none; }
.guides .expander rect { fill: #fff; stroke: #9a9a9a; }
.guides .expander path { stroke: #000; stroke-dasharray: none; }
.guides .check { fill: #fff; stroke: #000; }
.guides .tick { stroke: #000; stroke-width: 2; stroke-dasharray: none; }
.entry { display: flex; align-items: center; flex: 1; height: 20px; padding-left: 1px; gap: 6px; }
.row > .entry { top: 0; }
.entry .method { width: 15px; margin: 2px 0 0 1px; }
.sel { background: #f0f0f0; }
.colhead { height: 31px; padding: 3px 0 0 5px; line-height: 28px; }
.class-row:nth-child(odd) { background: #f5f5f5; }
.class-row { gap: 9px; }
.hist-row { padding-left: 3px; }
.upper { height: 251px; }

.raised { background: #f0f0f0; box-shadow: inset -1px -1px #696969, inset 1px 1px #fff, inset -2px -2px #a0a0a0; }
.vbar, .hbar { background: repeating-conic-gradient(#fff 0 25%, #f0f0f0 0 50%) 0 0 / 2px 2px; }
.vbar { width: 21px; display: flex; flex-direction: column; }
.btn { width: 21px; height: 21px; padding: 0 2px 1px 0; display: flex; align-items: center; justify-content: center; flex: none; }
.btn::after { content: ""; border: 5px solid transparent; }
.up::after { border-bottom-color: #000; border-top: 0; }
.down::after { border-top-color: #000; border-bottom: 0; }
.left::after { border-right-color: #000; border-left: 0; }
.right::after { border-left-color: #000; border-right: 0; }
.t1 { height: 102px; margin: 65px 0 auto; }
.t2 { height: 57px; margin: auto 0 0; }
.hbar { width: 323px; height: 21px; display: flex; justify-content: space-between; box-shadow: 21px 0 #f0f0f0; }
.hbar .thumb { width: 241px; margin: 0 auto 0 0; }

.tabs { display: flex; height: 24px; font: 12.500px "Noto Sans", sans-serif; }
.tab { display: flex; align-items: center; justify-content: center; }
.tab.on { width: 128px; height: 24px; padding: 2px 0 0 2px; border-bottom: 1px solid #696969; box-shadow: inset 0 -1px #a0a0a0, inset 1px 0 #fff; }
.log { width: 50px; height: 22px; margin-top: 1px; padding-left: 4px; border: 1px solid #696969; border-right-width: 2px; box-shadow: inset 0 -1px #a0a0a0; }
.tabs::after { content: ""; flex: 1; height: 2px; border-bottom: 1px solid #696969; }

.mdi { margin-left: 6px; width: 1566px; border-left: 1px solid #808080; }
.doc-tabs { height: 28px; display: flex; align-items: center; font: 12.500px "Noto Sans", sans-serif; }
.newtab { margin-left: 4px; }
.doc-tab { margin-left: 4px; width: 214px; height: 26px; padding-left: 13px; display: flex; align-items: center; gap: 4px; border-left: 1px solid #fff; border-right: 2px solid #696969; }
.doc-tab svg:last-child { margin-left: 2px; }
.canvas { margin-left: 2px; width: 1563px; height: 839px; }
.diagram { display: block; }
.uml { font: 24px "Liberation Sans", Arial, sans-serif; }
.msg { font: 21px "Noto Sans", sans-serif; }
.foot { font-family: "DejaVu Sans Condensed", "DejaVu Sans", sans-serif; }
.link { stroke: #f01414; fill: none; stroke-width: 1.200; }
.box { fill: #ff0; stroke: #fb2a10; stroke-width: 1.300; }
.under { stroke: #000; stroke-width: 1.400; }

.status { height: 35px; display: flex; padding-top: 2px; }
.sunk { height: 31px; border: 1px solid; border-color: #a0a0a0 #fff #fff #a0a0a0; display: flex; align-items: center; }
.sunk > span, .zoombtns > span { padding-top: 1px; }
.hint { width: 319px; padding-left: 1px; border-left-color: #d0d0d0; }
.zoomtext { margin-left: 712px; width: 713px; justify-content: flex-end; }
.pct { margin-right: 10px; }
.zoombtns { width: 83px; height: 30px; display: flex; align-items: center; justify-content: space-between; padding: 0 8px 0 7px; }
.zoombtns i { width: 1px; height: 18px; background: #a0a0a0; }
.lens { width: 33px; margin-left: 3px; padding-left: 7px; }
.slider { width: 104px; margin-left: 3px; position: relative; padding: 0 2px; }
.groove { width: 98px; height: 3px; border-top: 2px solid #808080; border-bottom: 1px solid #fff; }
.knob { position: absolute; left: 27px; top: 0; width: 13px; height: 30px; }
.lens.last { margin-left: 2px; border-right: 0; }

.taskbar { height: 60px; border-top: 1px solid #41474b; display: flex; align-items: center; color: #fff; background: linear-gradient(90deg, #24252b 0, #2f2322 95px, #33211f 130px, #222627 210px, #1d2827 300px, #13272e 480px, #15272e 1130px, #22262d 1260px, #14272e 1380px, #16272d 1470px, #30221f 1560px, #222426 1620px, #14272e 1720px, #14272e 1920px); }
.weather { margin: -2px 0 0 15px; }
.start { margin-left: 280px; }
.search { margin-left: 18px; width: 273px; height: 38px; border-radius: 19px; background: #f1f2f3; display: flex; align-items: center; gap: 11px; padding-left: 13px; color: #5c5c5c; font-size: 16px; }
.apps { margin-left: 6px; display: flex; gap: 5px; }
.app { width: 50px; height: 50px; display: flex; align-items: center; justify-content: center; border-radius: 4px; position: relative; }
.app svg { overflow: visible; }
.active { background: #26353b; box-shadow: inset 0 0 0 1px #2f3d43; }
.run::after, .active::after { content: ""; position: absolute; left: 21px; bottom: 1px; width: 8px; height: 4px; border-radius: 2px; background: #9a9fa1; }
.active::after { left: 15px; width: 20px; background: #4cc2ff; }
.chev { margin-left: 29px; }
.sync { margin: -2px 0 0 21px; }
.lang { margin-left: 21px; width: 32px; }
.lang, .clock { font-size: 14.500px; line-height: 20px; display: flex; flex-direction: column; align-items: center; }
.net { margin: -1px 0 0 20px; }
.vol { margin: -2px 0 0 9px; }
.bat { margin: -2px 0 0 9px; }
.clock { margin-left: 19px; width: 78px; align-items: flex-end; }
.count { margin: -2px 0 0 9px; width: 20px; height: 20px; border-radius: 50%; background: #4cc2ff; color: #10222c; font-size: 12px; line-height: 20px; text-align: center; }
</style>
